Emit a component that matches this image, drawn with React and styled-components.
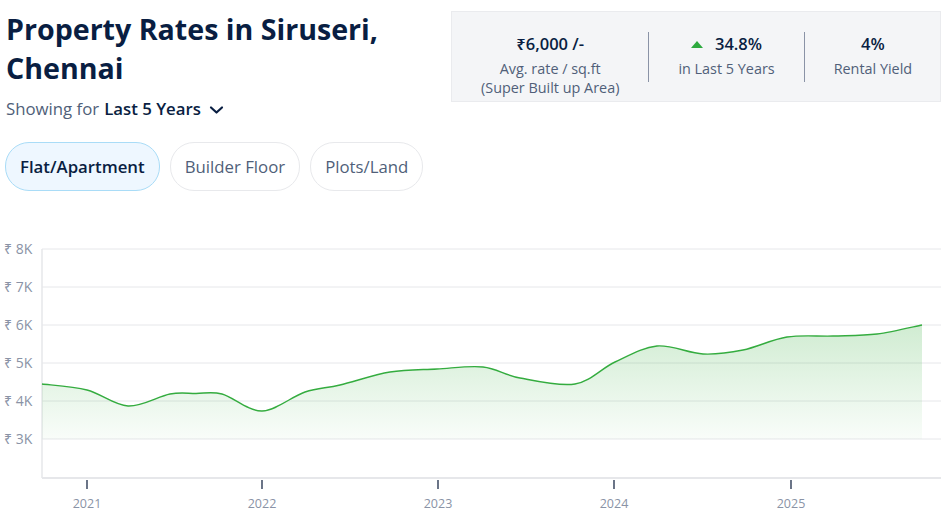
import styled, { createGlobalStyle } from 'styled-components'

const GlobalStyle = createGlobalStyle`
  body {
    margin: 0;
    background: #fff;
    font-family: "Open Sans", "Noto Sans", sans-serif;
    color: #091e42;
  }
`

const Categories = ['Flat/Apartment', 'Builder Floor', 'Plots/Land']

const Stats = [
  { value: '₹6,000 /-', label: ['Avg. rate / sq.ft', '(Super Built up Area)'] },
  { value: '34.8%', label: ['in Last 5 Years'], up: true },
  { value: '4%', label: ['Rental Yield'] },
]

// page coordinates of the price line, read off the screenshot
const Points = [
  [42, 384], [87, 390], [128, 406], [170, 394], [196, 393.5], [222, 394], [262, 411],
  [305, 392], [340, 385], [390, 372], [437, 369], [483, 367], [520, 378],
  [575, 384], [615, 362], [657, 346], [703, 354], [743, 350], [787, 337],
  [833, 336], [877, 334], [922, 325],
]

const GridY = [249, 287, 325, 363, 401, 439]
const YLabels = ['8K', '7K', '6K', '5K', '4K', '3K']
const Years = [[87, '2021'], [262, '2022'], [438, '2023'], [614, '2024'], [791, '2025']]

function smoothPath(pts) {
  let d = `M ${pts[0][0]} ${pts[0][1]}`
  for (let i = 0; i < pts.length - 1; i++) {
    const p0 = pts[i - 1] || pts[i]
    const p1 = pts[i]
    const p2 = pts[i + 1]
    const p3 = pts[i + 2] || p2
    const c1x = p1[0] + (p2[0] - p0[0]) / 6
    const c1y = p1[1] + (p2[1] - p0[1]) / 6
    const c2x = p2[0] - (p3[0] - p1[0]) / 6
    const c2y = p2[1] - (p3[1] - p1[1]) / 6
    d += ` C ${c1x} ${c1y} ${c2x} ${c2y} ${p2[0]} ${p2[1]}`
  }
  return d
}

function App() {
  const line = smoothPath(Points)
  const last = Points[Points.length - 1]
  const area = `${line} L ${last[0]} 439 L ${Points[0][0]} 439 Z`

  return (
    <>
      <GlobalStyle />
      <Top>
        <Intro>
          <Title>Property Rates in Siruseri, Chennai</Title>
          <Showing>
            Showing for <strong>Last 5 Years</strong>
            <svg width="15" height="10" viewBox="0 0 15 10">
              <path d="M2 2.5 L7.5 7.5 L13 2.5" fill="none" stroke="#091e42" strokeWidth="2.2" strokeLinecap="round" strokeLinejoin="round" />
            </svg>
          </Showing>
          <Pills>
            {Categories.map((item, index) => (
              <Pill key={item} $active={index === 0}>{item}</Pill>
            ))}
          </Pills>
        </Intro>
        <StatBox>
          {Stats.map((s, index) => (
            <StatGroup key={s.value}>
              {index > 0 && <Divider />}
              <Stat>
                <StatValue>
                  {s.up && <UpArrow />}
                  {s.value}
                </StatValue>
                {s.label.map((l) => (
                  <StatLabel key={l}>{l}</StatLabel>
                ))}
              </Stat>
            </StatGroup>
          ))}
        </StatBox>
      </Top>

      <Chart viewBox="0 232 946 295" width="946" height="295">
        <defs>
          <linearGradient id="fillGreen" x1="0" y1="325" x2="0" y2="439" gradientUnits="userSpaceOnUse">
            <stop offset="0" stopColor="#3cb043" stopOpacity="0.24" />
            <stop offset="1" stopColor="#3cb043" stopOpacity="0.03" />
          </linearGradient>
        </defs>
        {GridY.map((y, i) => (
          <g key={y}>
            <line x1="42" x2="941" y1={y} y2={y} stroke="#e6e7ea" strokeWidth="1" />
            <text x="4" y={y + 5} fontSize="14" fill="#8a93a6">₹ {YLabels[i]}</text>
          </g>
        ))}
        <line x1="42" x2="42" y1="249" y2="478" stroke="#e6e7ea" strokeWidth="1.5" />
        <path d={area} fill="url(#fillGreen)" />
        <path d={line} fill="none" stroke="#34ac3f" strokeWidth="1.4" />
        <line x1="42" x2="941" y1="478" y2="478" stroke="#e6e7ea" strokeWidth="2" />
        {Years.map(([x, label]) => (
          <g key={label}>
            <line x1={x} x2={x} y1="480" y2="489" stroke="#2b3a55" strokeWidth="1.4" />
            <text x={x} y="508" fontSize="12.5" fill="#8a93a6" textAnchor="middle">{label}</text>
          </g>
        ))}
      </Chart>
    </>
  )
}

export default App

const Top = styled.div`
  display: flex;
  justify-content: space-between;
  align-items: flex-start;
  padding: 0 5px 0 6px;
`

const Intro = styled.div`
  flex: 1;
  min-width: 0;
  padding-top: 9px;
`

const Title = styled.h1`
  margin: 0;
  max-width: 430px;
  font-size: 28.6px;
  line-height: 39px;
  font-weight: 700;
  color: #091e42;
`

const Showing = styled.div`
  margin-top: 10px;
  display: flex;
  align-items: center;
  gap: 5px;
  font-size: 16.8px;
  line-height: 24px;
  color: #505f79;

  strong {
    font-weight: 600;
    color: #091e42;
  }

  svg {
    margin-left: 3px;
    margin-top: 2px;
  }
`

const Pills = styled.div`
  display: flex;
  gap: 10px;
  margin-top: 21px;
  margin-left: -1px;
`

const Pill = styled.div`
  height: 47px;
  display: flex;
  align-items: center;
  padding: 0 14px;
  border-radius: 24px;
  font-size: 16.8px;
  font-weight: ${(p) => (p.$active ? 600 : 400)};
  color: ${(p) => (p.$active ? '#091e42' : '#505f79')};
  background: ${(p) => (p.$active ? '#eef7ff' : '#fff')};
  border: 1px solid ${(p) => (p.$active ? '#a9dcf7' : '#e8e9ec')};
`

const StatBox = styled.div`
  margin-top: 11px;
  width: 488px;
  display: flex;
  align-items: flex-start;
  padding: 20px 0 4px;
  background: #f4f5f7;
  border: 1px solid #eaebee;
`

const StatGroup = styled.div`
  display: flex;
  align-items: flex-start;
`

const Divider = styled.div`
  width: 1px;
  height: 50px;
  background: #8a93a6;
`

const Stat = styled.div`
  display: flex;
  flex-direction: column;
  align-items: center;
  padding: 1px 29px 0;
`

const StatValue = styled.div`
  display: flex;
  align-items: center;
  gap: 8px;
  font-size: 16.5px;
  line-height: 22px;
  font-weight: 600;
  color: #091e42;
  margin-bottom: 4px;
`

const UpArrow = styled.span`
  width: 0;
  height: 0;
  border-left: 6px solid transparent;
  border-right: 6px solid transparent;
  border-bottom: 7px solid #2eaa3f;
  margin-right: 4px;
`

const StatLabel = styled.div`
  font-size: 14.4px;
  line-height: 19px;
  color: #505f79;
  white-space: nowrap;
`

const Chart = styled.svg`
  display: block;
  margin-top: 41px;
  font-family: "Open Sans", "Noto Sans", sans-serif;
`
